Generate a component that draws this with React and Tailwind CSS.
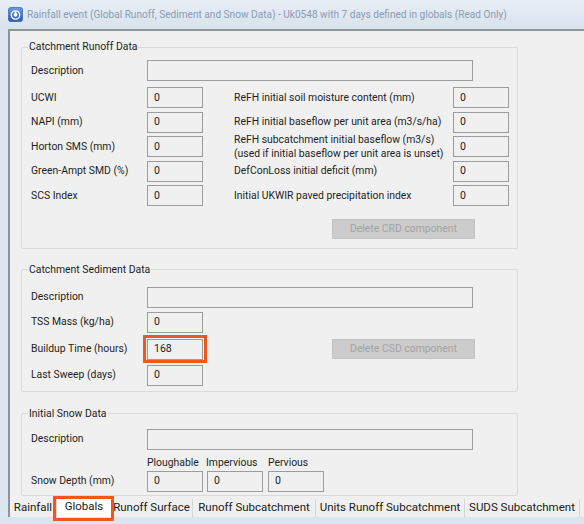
import React from "react";

const font = "font-['Roboto',sans-serif]";

function Box({ value = "", w = "w-[56px]", className = "" }) {
  return (
    <div
      className={`h-[21px] ${w} border border-[#9c9c9c] bg-[#f0f0f0] flex items-center pl-[6px] text-[10.5px] text-[#222] shrink-0 ${className}`}
    >
      {value}
    </div>
  );
}

function Row({ label, children, className = "" }) {
  return (
    <div className={`flex items-center h-[21px] ${className}`}>
      <div className="w-[116px] shrink-0 text-[10.4px] text-[#1e1e1e]">{label}</div>
      {children}
    </div>
  );
}

function Group({ title, className = "", children }) {
  return (
    <fieldset className={`w-[497px] border border-[#dadada] rounded-[2px] ${className}`}>
      <legend className="ml-[6px] px-[1px] leading-[14px] text-[10.4px] text-[#1e1e1e]">{title}</legend>
      {children}
    </fieldset>
  );
}

const runoffRows = [
  ["UCWI", "ReFH initial soil moisture content (mm)"],
  ["NAPI (mm)", "ReFH initial baseflow per unit area (m3/s/ha)"],
  ["Horton SMS (mm)", "ReFH subcatchment initial baseflow (m3/s)\n(used if initial baseflow per unit area is unset)"],
  ["Green-Ampt SMD (%)", "DefConLoss initial deficit (mm)"],
  ["SCS Index", "Initial UKWIR paved precipitation index"],
];

const tabs = [
  ["Rainfall", "w-[47px]"],
  ["Globals", "w-[54px]"],
  ["Runoff Surface", "w-[82px]"],
  ["Runoff Subcatchment", "w-[123px]"],
  ["Units Runoff Subcatchment", "w-[149px]"],
  ["SUDS Subcatchment", "w-[115px]"],
];

export default function App() {
  return (
    <div className={`w-[584px] h-[524px] bg-[#dde6f0] flex flex-col overflow-hidden ${font}`}>
      {/* title bar */}
      <div className="h-[29px] shrink-0 flex items-center pl-[8px] bg-gradient-to-b from-[#e8eef6] to-[#d8e2ed]">
        <svg width="15" height="15" viewBox="0 0 15 15" className="shrink-0">
          <defs>
            <linearGradient id="ig" x1="0" y1="0" x2="0" y2="1">
              <stop offset="0" stopColor="#6b9be0" />
              <stop offset="1" stopColor="#2a5bb5" />
            </linearGradient>
          </defs>
          <rect x="0.5" y="0.5" width="14" height="14" rx="2" fill="url(#ig)" stroke="#2c4f8f" strokeWidth="0.6" />
          <circle cx="7.5" cy="8" r="4.2" fill="none" stroke="#fff" strokeWidth="1.3" />
          <path d="M7.5 4.2 C8.8 6 9.3 7 9.3 8 a1.8 1.8 0 0 1 -3.6 0 c0 -1 0.5 -2 1.8 -3.8z" fill="#fff" />
        </svg>
        <span className="ml-[4px] text-[10.1px] text-[#8a9bb2] whitespace-nowrap">
          Rainfall event (Global Runoff, Sediment and Snow Data) - Uk0548 with 7 days defined in globals (Read Only)
        </span>
      </div>

      {/* body */}
      <div className="flex flex-1">
        <div className="w-[8px] shrink-0" />
        <div className="flex-1 flex flex-col border-l-2 border-t-2 border-[#8d949c] bg-[#f0f0f0]">
          <div className="pl-[11px] pt-[9px] flex flex-col">
            {/* Catchment Runoff Data */}
            <Group title="Catchment Runoff Data">
              <div className="pl-[9px] pt-[6px] pb-[9px] flex flex-col">
                <Row label="Description">
                  <Box w="w-[326px]" />
                </Row>
                <div className="flex flex-col gap-[3.5px] mt-[6px]">
                  {runoffRows.map(([l, r]) => (
                    <div key={l} className="flex items-center h-[21px]">
                      <div className="w-[116px] shrink-0 text-[10.4px] text-[#1e1e1e]">{l}</div>
                      <Box value="0" />
                      <div className="ml-[31px] w-[219px] shrink-0 text-[10.4px] leading-[14px] text-[#1e1e1e] whitespace-pre">
                        {r}
                      </div>
                      <Box value="0" />
                    </div>
                  ))}
                </div>
                <div className="mt-[12.5px] ml-[301px] w-[143px] h-[20px] bg-[#cccccc] border border-[#c2c2c2] flex items-center justify-center text-[10.4px] text-[#a3a3a3]">
                  Delete CRD component
                </div>
              </div>
            </Group>

            {/* Catchment Sediment Data */}
            <Group title="Catchment Sediment Data" className="mt-[14px]">
              <div className="pl-[9px] pt-[10px] pb-[5px] flex flex-col">
                <Row label="Description">
                  <Box w="w-[326px]" />
                </Row>
                <Row label="TSS Mass (kg/ha)" className="mt-[4px]">
                  <Box value="0" />
                </Row>
                <Row label="Buildup Time (hours)" className="mt-[6px]">
                  <div className="relative">
                    <Box value="168" />
                    <div className="absolute -left-[4px] -right-[4px] -top-[4px] -bottom-[3px] border-[3px] border-[#f0561d]" />
                  </div>
                  <div className="ml-[129px] w-[143px] h-[20px] bg-[#cccccc] border border-[#c2c2c2] flex items-center justify-center text-[10.4px] text-[#a3a3a3]">
                    Delete CSD component
                  </div>
                </Row>
                <Row label="Last Sweep (days)" className="mt-[5px]">
                  <Box value="0" />
                </Row>
              </div>
            </Group>

            {/* Initial Snow Data */}
            <Group title="Initial Snow Data" className="mt-[15px]">
              <div className="pl-[9px] pt-[8px] pb-[3px] flex flex-col">
                <Row label="Description">
                  <Box w="w-[326px]" />
                </Row>
                <div className="flex h-[14px] mt-[6px] items-center text-[10.4px] text-[#1e1e1e]">
                  <div className="w-[116px] shrink-0" />
                  <div className="w-[59px]">Ploughable</div>
                  <div className="w-[62px]">Impervious</div>
                  <div>Pervious</div>
                </div>
                <Row label="Snow Depth (mm)" className="mt-[1px]">
                  <Box value="0" />
                  <Box value="0" className="ml-[4px]" />
                  <Box value="0" className="ml-[5px]" />
                </Row>
              </div>
            </Group>
          </div>

          {/* tabs */}
          <div className="mt-auto h-[18px] flex items-end">
            {tabs.map(([t, w]) =>
              t === "Globals" ? (
                <div key={t} className={`relative ${w} h-[20px] shrink-0 bg-white flex items-center justify-center text-[11.5px] text-[#1a1a1a] whitespace-nowrap`}>
                  {t}
                  <div className="absolute -left-[4px] -right-[3px] -top-[1px] -bottom-[4px] border-[3px] border-[#f0561d]" />
                </div>
              ) : (
                <div key={t} className={`${w} h-[18px] shrink-0 border-r border-[#d6d6d6] flex items-center justify-center text-[11.5px] text-[#1a1a1a] whitespace-nowrap`}>
                  {t}
                </div>
              )
            )}
          </div>
        </div>
      </div>
      <div className="h-[7px] shrink-0 bg-[#dbe5f1]" />
    </div>
  );
}
